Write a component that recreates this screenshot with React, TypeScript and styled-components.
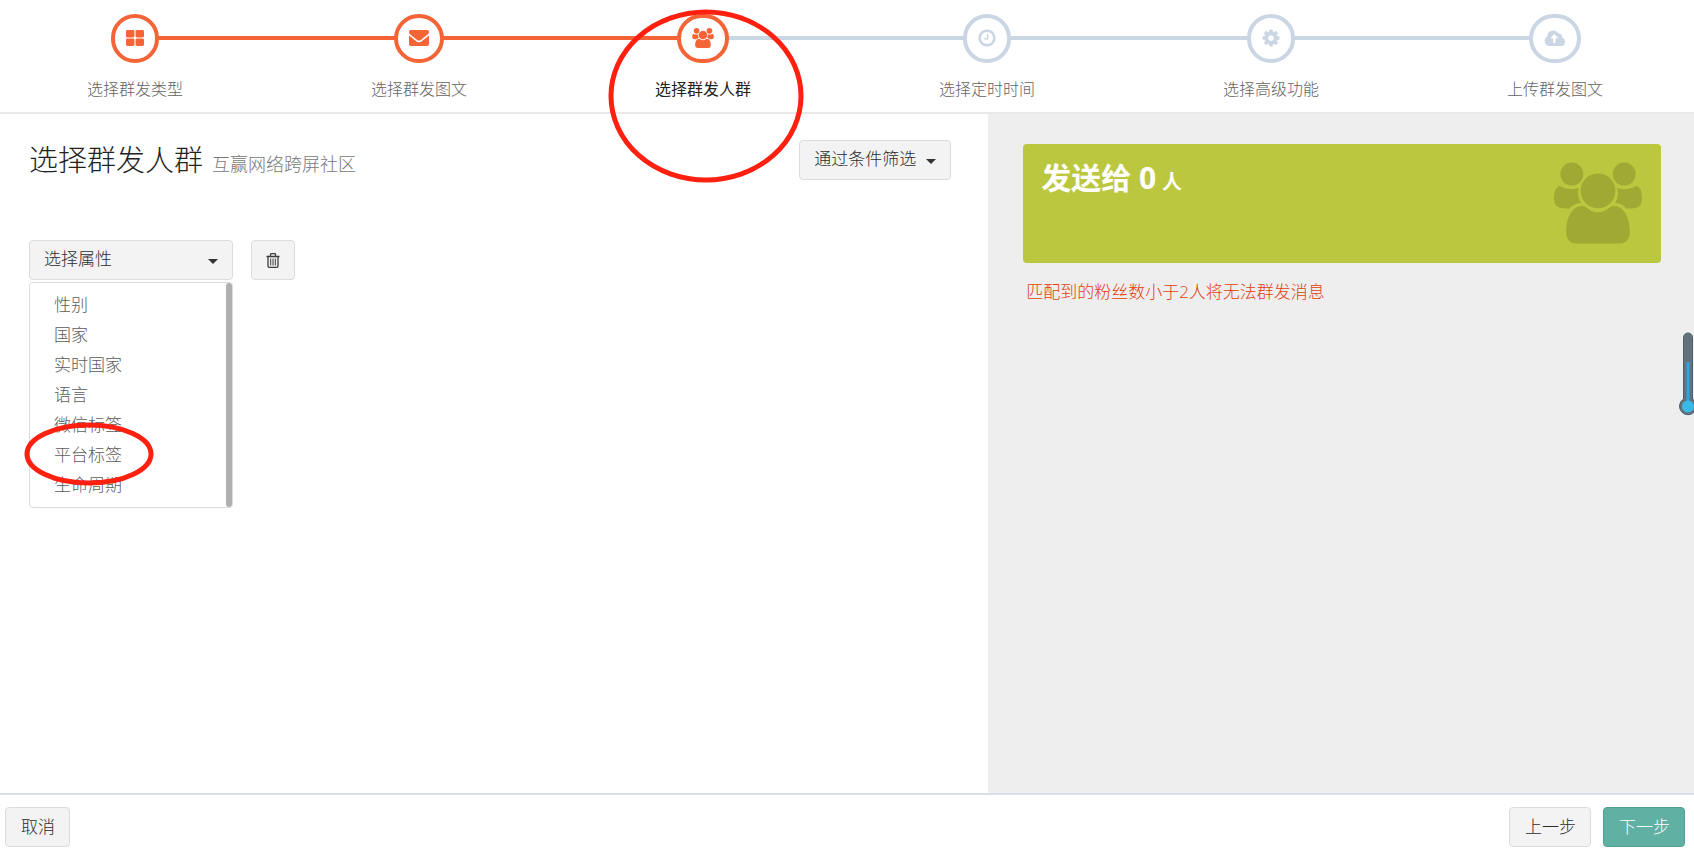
import React, { useState } from "react";
import styled, { createGlobalStyle, css } from "styled-components";

const GlobalStyle = createGlobalStyle`
  *, *::before, *::after { box-sizing: border-box; }
  body {
    margin: 0;
    background: #fff;
    color: #3c3c3c;
    font-family: "Open Sans", "Noto Sans CJK SC", sans-serif;
    font-size: 17px;
    font-weight: 300;
  }
  button, select { font: inherit; color: inherit; }
`;

const accent = "#f56437";
const muted = "#cbd6e4";

const Page = styled.div`
  display: flex;
  flex-direction: column;
  min-height: 100vh;
  overflow-x: hidden;
`;

const Steps = styled.ol`
  display: flex;
  align-items: flex-start;
  justify-content: space-between;
  margin: 0;
  padding: 14px 89px 12px 85px;
  list-style: none;
  border-bottom: 2px solid #e9e9e9;
`;

const Step = styled.li<{ $current?: boolean }>`
  position: relative;
  display: flex;
  flex-direction: column;
  align-items: center;
  gap: 15px;
  flex: none;
  width: 100px;
  color: ${(p) => (p.$current ? "#222" : "#626262")};
  font-weight: ${(p) => (p.$current ? 400 : 300)};
  font-size: 16px;
  line-height: 22px;
  white-space: nowrap;
`;

const StepCircle = styled.span<{ $done: boolean }>`
  position: relative;
  z-index: 1;
  display: flex;
  align-items: center;
  justify-content: center;
  height: 49px;
  padding: 0 11px 2px;
  border: 4px solid ${(p) => (p.$done ? accent : muted)};
  border-radius: 26px;
  background: #fff;
  color: ${(p) => (p.$done ? accent : muted)};
`;

const Connector = styled.li<{ $done: boolean }>`
  flex: 1;
  height: 4px;
  margin: 22px -30px 0;
  background: ${(p) => (p.$done ? accent : muted)};
`;

const Mark = styled.svg`
  position: absolute;
  z-index: 5;
  overflow: visible;
  pointer-events: none;
  fill: none;
  stroke: #ff2010;
  stroke-width: 5px;
`;

const StepMark = styled(Mark)`
  top: -4px;
  left: -45px;
`;

const OptionMark = styled(Mark)`
  top: -17px;
  left: -6px;
`;

const Main = styled.main`
  flex: 1;
  display: grid;
  grid-template-columns: 7fr 5fr;
`;

const Workspace = styled.section`
  padding: 26px 37px 36px 29px;
`;

const Heading = styled.header`
  display: flex;
  align-items: flex-start;
  justify-content: space-between;
`;

const Title = styled.h1`
  margin: 0;
  font-size: 29px;
  line-height: 40px;
  font-weight: 300;
  color: #222;
`;

const Subtitle = styled.small`
  margin-left: 9px;
  font-size: 18px;
  color: #777;
`;

const control = css`
  height: 40px;
  padding: 0 14px;
  border: 1px solid #dcdcdc;
  border-radius: 4px;
  background: #f3f3f3;
  color: #2c2c2c;
  line-height: 24px;
  cursor: pointer;
`;

const SelectWrap = styled.div<{ $width: number }>`
  position: relative;
  width: ${(p) => p.$width}px;
`;

const Select = styled.select`
  ${control}
  display: block;
  width: 100%;
  padding-bottom: 2px;
  appearance: none;
`;

const Caret = styled.span`
  position: absolute;
  top: 19px;
  right: 15px;
  border: 5px solid transparent;
  border-top-color: #333;
  border-bottom: 0;
  pointer-events: none;
`;

const Button = styled.button<{ $primary?: boolean }>`
  ${control}
  display: flex;
  align-items: center;
  justify-content: center;
  ${(p) =>
    p.$primary &&
    css`
      border-color: #519f90;
      background: #60b1a3;
      color: #fff;
    `}
`;

const FooterButton = styled(Button)`
  padding: 0 14px 0 15px;
`;

const FilterRow = styled.div`
  display: flex;
  align-items: flex-start;
  gap: 18px;
  margin-top: 56px;
`;

const Menu = styled.ul`
  position: absolute;
  top: 42px;
  left: 0;
  width: 100%;
  margin: 0;
  padding: 7px 0;
  list-style: none;
  border: 1px solid #dcdcdc;
  border-radius: 4px;
  background: #fff;
`;

const Thumb = styled.span`
  position: absolute;
  top: 0;
  bottom: 0;
  right: 0;
  width: 6px;
  border-radius: 4px;
  background: #b0b0b0;
`;

const MenuItem = styled.li`
  position: relative;
`;

const Option = styled.button`
  display: block;
  width: 100%;
  height: 30px;
  padding: 0 24px;
  border: 0;
  background: none;
  color: #5c5c5c;
  line-height: 30px;
  text-align: left;
  cursor: pointer;
`;

const Summary = styled.aside`
  position: relative;
  padding: 30px 33px 30px 35px;
  background: #eee;
`;

const Card = styled.div`
  display: flex;
  justify-content: space-between;
  height: 119px;
  padding: 18px 19px 18px 18px;
  border-radius: 4px;
  background: #bbc83f;
  color: #fff;
`;

const Count = styled.p`
  margin: 0;
  font-size: 30px;
  font-weight: 700;
  line-height: 32px;
`;

const Unit = styled.span`
  margin-left: 6px;
  font-size: 20px;
`;

const CardIcon = styled.span`
  color: #a0a933;
`;

const Warning = styled.p`
  margin: 17px 3px 0;
  color: #e2400f;
  line-height: 24px;
`;

const Thermometer = styled.svg`
  position: absolute;
  top: 218px;
  right: -3px;
`;

const Footer = styled.footer`
  display: flex;
  gap: 12px;
  padding: 12px 9px 7px 5px;
  border-top: 2px solid #d8deea;
  background: #fff;
`;

const Spacer = styled.span`
  flex: 1;
`;

const GridIcon = () => (
  <svg width="18" height="16" viewBox="0 0 18 16" fill="currentColor">
    <rect width="8.4" height="7.4" rx="1.4" />
    <rect x="9.6" width="8.4" height="7.4" rx="1.4" />
    <rect y="8.5" width="8.4" height="7.4" rx="1.4" />
    <rect x="9.6" y="8.5" width="8.4" height="7.4" rx="1.4" />
  </svg>
);

const MailIcon = () => (
  <svg width="20" height="16" viewBox="0 0 20 16" fill="currentColor">
    <path d="M1.800 0h16.400q1.800 0 1.800 1.800 0 1.800-1.600 3l-6.600 5.200q-1.800 1.200-3.600 0L1.600 4.800Q0 3.600 0 1.800 0 0 1.800 0z" />
    <path d="M0 5.500l7.600 6q2.400 1.700 4.800 0l7.600-6V14q0 2-2 2H2q-2 0-2-2z" />
  </svg>
);

const PeopleIcon = ({ width, height }: { width: number; height: number }) => {
  const side = (
    <>
      <ellipse cx="18" cy="11.7" rx="11.600" ry="11.600" />
      <path d="M5.500 23.500Q11 27 18 27q4 0 7.500-1.500-1.300 2-1.300 5.500.3 5.500 3 10-8 .7-11.200 5.500H10q-10 0-10-9.500 0-12 5.500-13.500z" />
    </>
  );
  return (
    <svg width={width} height={height} viewBox="0 0 89 82" fill="currentColor">
      {side}
      <g transform="translate(89 0) scale(-1 1)">{side}</g>
      <circle cx="44.500" cy="28.700" r="17.600" />
      <path d="M29 44c4.500 0 6 6.300 15.500 6.300S55.500 44 60 44c12 0 16.700 14 16.700 26 0 8-4 12-12 12H24.300c-8 0-12-4-12-12 0-12 4.700-26 16.700-26z" />
    </svg>
  );
};

const ClockIcon = () => (
  <svg width="18" height="20" viewBox="128 0 1536 1792" fill="currentColor">
    <path d="M1024 544v448q0 14-9 23t-23 9h-320q-14 0-23-9t-9-23v-64q0-14 9-23t23-9h224v-352q0-14 9-23t23-9h64q14 0 23 9t9 23zm416 352q0-148-73-273t-198-198-273-73-273 73-198 198-73 273 73 273 198 198 273 73 273-73 198-198 73-273zm224 0q0 209-103 385.500t-279.500 279.500-385.500 103-385.500-103-279.500-279.500-103-385.500 103-385.500 279.500-279.500 385.500-103 385.500 103 279.500 279.500 103 385.500z" />
  </svg>
);

const CogIcon = () => (
  <svg width="18" height="20" viewBox="128 0 1536 1792" fill="currentColor">
    <path d="M1152 896q0-106-75-181t-181-75-181 75-75 181 75 181 181 75 181-75 75-181zm512-109v222q0 12-8 23t-20 13l-185 28q-19 54-39 91 35 50 107 138 10 12 10 25t-9 23q-27 37-99 108t-94 71q-12 0-26-9l-138-108q-44 23-91 38-16 136-29 186-7 28-36 28h-222q-14 0-24.500-8.500t-11.500-21.500l-28-184q-49-16-90-37l-141 107q-10 9-25 9-14 0-25-11-126-114-165-168-7-10-7-23 0-12 8-23 15-21 51-66.500t54-70.500q-27-50-41-99l-183-27q-13-2-21-12.500t-8-23.500v-222q0-12 8-23t19-13l186-28q14-46 39-92-40-57-107-138-10-12-10-24 0-10 9-23 26-36 98.500-107.500t94.500-71.500q13 0 26 10l138 107q44-23 91-38 16-136 29-186 7-28 36-28h222q14 0 24.500 8.500t11.500 21.500l28 184q49 16 90 37l142-107q9-9 24-9 13 0 25 10 129 119 165 170 7 8 7 22 0 12-8 23-15 21-51 66.500t-54 70.500q26 50 41 98l183 28q13 2 21 12.500t8 23.500z" />
  </svg>
);

const CloudIcon = () => (
  <svg width="22" height="16" viewBox="0 0 21 16" fill="currentColor" fillRule="evenodd">
    <path d="M5 16a5 5 0 0 1-2.200-9.400A6 6 0 0 1 14 3.500a3.300 3.300 0 0 1 3.500 4.300A4.200 4.200 0 0 1 16.800 16zM9.700 4L5.800 8.300h2.700v4.400h2.600V8.300h2.700z" />
  </svg>
);

const TrashIcon = () => (
  <svg width="14" height="15" viewBox="0 0 14 15" fill="none" stroke="#3c3c3c">
    <path d="M0.500 3.500h13M4.500 3.300V1.500q0-.8.800-.8h3.400q.8 0 .8.800v1.800M2 3.800v9.200q0 1.300 1.300 1.300h7.400q1.300 0 1.300-1.300V3.800" strokeWidth="1.300" />
    <path d="M4.700 5.500v7M7 5.500v7M9.300 5.500v7" />
  </svg>
);

const steps = [
  { label: "选择群发类型", icon: <GridIcon /> },
  { label: "选择群发图文", icon: <MailIcon /> },
  { label: "选择群发人群", icon: <PeopleIcon width={22} height={20} /> },
  { label: "选择定时时间", icon: <ClockIcon /> },
  { label: "选择高级功能", icon: <CogIcon /> },
  { label: "上传群发图文", icon: <CloudIcon /> },
];
const currentStep = 2;

const attributes = ["性别", "国家", "实时国家", "语言", "微信标签", "平台标签", "生命周期"];
const marked = "平台标签";

export default function App() {
  const [attribute, setAttribute] = useState("");

  return (
    <Page>
      <GlobalStyle />
      <Steps>
        {steps.map((step, i) => (
          <React.Fragment key={step.label}>
            {i > 0 && <Connector aria-hidden $done={i <= currentStep} />}
            <Step $current={i === currentStep} aria-current={i === currentStep ? "step" : undefined}>
              <StepCircle $done={i <= currentStep}>{step.icon}</StepCircle>
              {step.label}
              {i === currentStep && (
                <StepMark width="196" height="174" aria-hidden>
                  <ellipse cx="98" cy="86" rx="95" ry="84" />
                </StepMark>
              )}
            </Step>
          </React.Fragment>
        ))}
      </Steps>

      <Main>
        <Workspace>
          <Heading>
            <Title>
              选择群发人群
              <Subtitle>互赢网络跨屏社区</Subtitle>
            </Title>
            <SelectWrap $width={152}>
              <Select aria-label="筛选方式">
                <option>通过条件筛选</option>
              </Select>
              <Caret />
            </SelectWrap>
          </Heading>

          <FilterRow>
            <SelectWrap $width={204}>
              <Select
                aria-label="选择属性"
                value={attribute}
                onChange={(e) => setAttribute(e.target.value)}
              >
                <option value="">选择属性</option>
                {attributes.map((name) => (
                  <option key={name}>{name}</option>
                ))}
              </Select>
              <Caret />
              <Menu>
                {attributes.map((name) => (
                  <MenuItem key={name}>
                    <Option type="button" onClick={() => setAttribute(name)}>
                      {name}
                    </Option>
                    {name === marked && (
                      <OptionMark width="130" height="63" aria-hidden>
                        <ellipse cx="65" cy="31" rx="62" ry="29" />
                      </OptionMark>
                    )}
                  </MenuItem>
                ))}
                <Thumb />
              </Menu>
            </SelectWrap>
            <Button type="button" aria-label="删除">
              <TrashIcon />
            </Button>
          </FilterRow>
        </Workspace>

        <Summary>
          <Card>
            <Count>
              发送给 0<Unit>人</Unit>
            </Count>
            <CardIcon>
              <PeopleIcon width={88} height={82} />
            </CardIcon>
          </Card>
          <Warning>匹配到的粉丝数小于2人将无法群发消息</Warning>
          <Thermometer width="18" height="84" viewBox="0 0 18 84" aria-hidden>
            <path d="M4.500 5.500a4.500 4.500 0 0 1 9 0V67a8.500 8.500 0 1 1-9 0z" fill="#61727b" stroke="#4b606c" />
            <path d="M7.500 30h3v40h-3z" fill="#2aa5e2" />
            <circle cx="9" cy="74.500" r="6" fill="#38b9e8" />
          </Thermometer>
        </Summary>
      </Main>

      <Footer>
        <FooterButton type="button">取消</FooterButton>
        <Spacer />
        <FooterButton type="button">上一步</FooterButton>
        <FooterButton type="button" $primary>
          下一步
        </FooterButton>
      </Footer>
    </Page>
  );
}
